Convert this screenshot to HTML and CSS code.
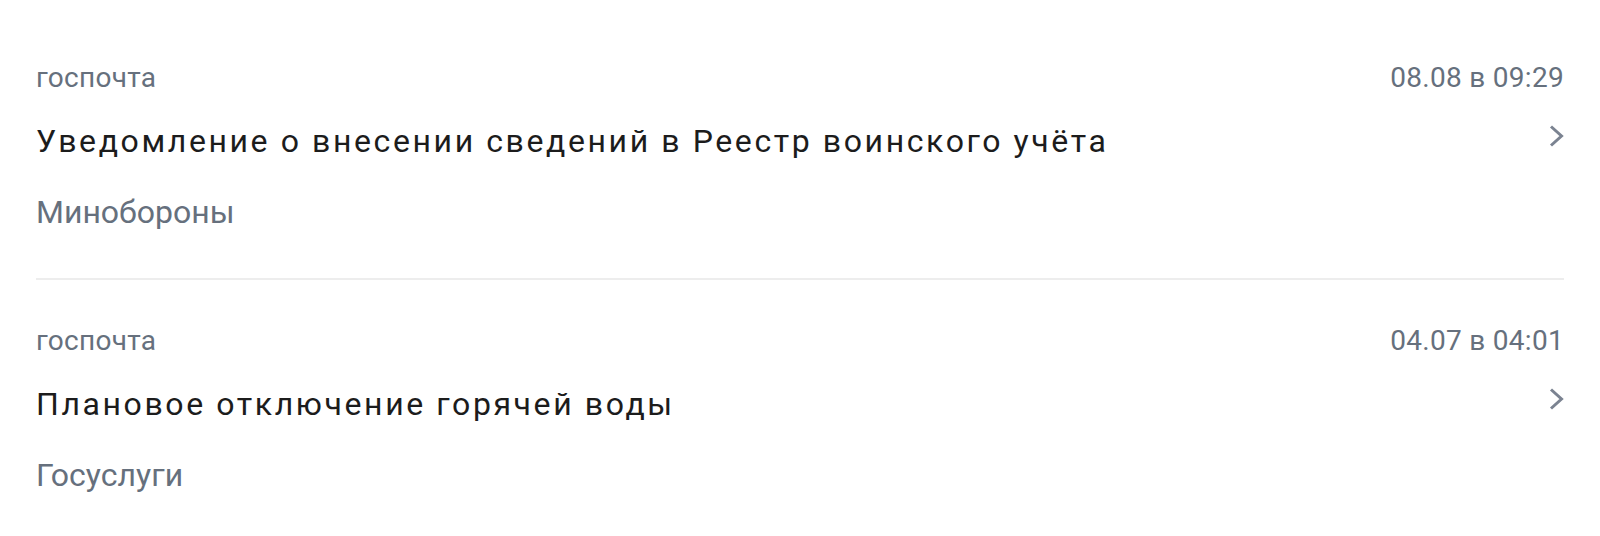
FILE: index.html
```html
<!DOCTYPE html>
<html lang="ru">
<head>
<meta charset="utf-8">
<link rel="stylesheet" href="styles.css">
</head>
<body>
<div class="list">
  <div class="item">
    <div class="meta">
      <span class="source">госпочта</span>
      <span class="date">08.08 в 09:29</span>
    </div>
    <div class="title-row">
      <span class="title">Уведомление о внесении сведений в Реестр воинского учёта</span>
      <svg class="chevron" width="15" height="22" viewBox="0 0 15 22"><polyline points="2,1.5 12.5,11 2,20.5" fill="none" stroke="#7b8391" stroke-width="3"/></svg>
    </div>
    <div class="sender">Минобороны</div>
  </div>
  <div class="item">
    <div class="meta">
      <span class="source">госпочта</span>
      <span class="date">04.07 в 04:01</span>
    </div>
    <div class="title-row">
      <span class="title">Плановое отключение горячей воды</span>
      <svg class="chevron" width="15" height="22" viewBox="0 0 15 22"><polyline points="2,1.5 12.5,11 2,20.5" fill="none" stroke="#7b8391" stroke-width="3"/></svg>
    </div>
    <div class="sender">Госуслуги</div>
  </div>
</div>
</body>
</html>
```

FILE: styles.css
```css
html, body {
  margin: 0;
  padding: 0;
  background: #ffffff;
}
body {
  font-family: Roboto, "Noto Sans", sans-serif;
}
.list {
  padding: 17px 36px 0 36px;
}
.item {
  padding: 43px 0 46px 0;
  border-bottom: 2px solid #ededed;
}
.item:last-child {
  border-bottom: none;
}
.meta {
  display: flex;
  justify-content: space-between;
  font-size: 28px;
  line-height: 36px;
  letter-spacing: 0.3px;
  color: #66707d;
}
.title-row {
  display: flex;
  justify-content: space-between;
  align-items: flex-start;
  margin-top: 25px;
}
.title {
  font-size: 32px;
  line-height: 40px;
  letter-spacing: 2.6px;
  color: #1c1c1c;
}
.chevron {
  margin-top: 4px;
  flex-shrink: 0;
}
.sender {
  margin-top: 31px;
  font-size: 32px;
  line-height: 40px;
  color: #66707d;
}
```
